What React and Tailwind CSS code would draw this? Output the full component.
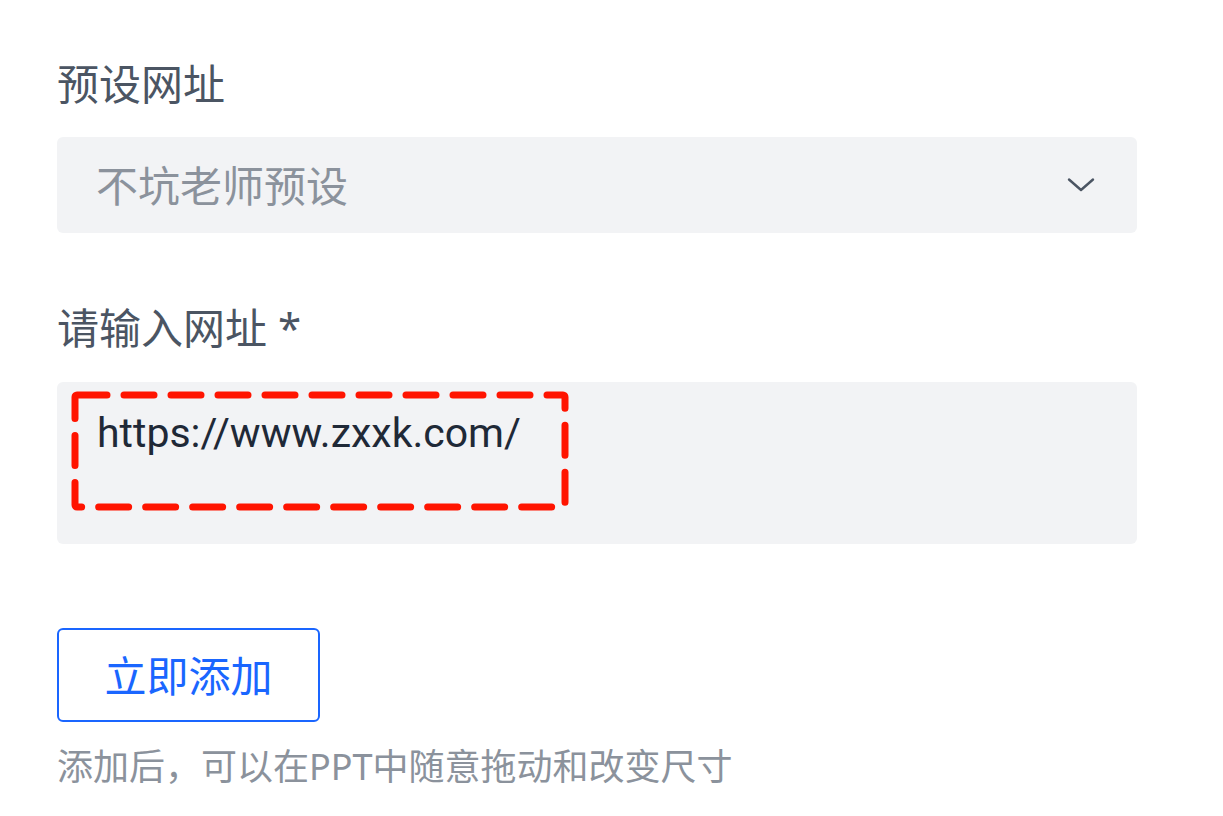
import React from 'react';

function Chevron() {
  return (
    <svg width="28" height="16" viewBox="0 0 28 16" fill="none" className="shrink-0">
      <path d="M2 2.5 L14 13 L26 2.5" stroke="#4b5563" strokeWidth="2.4" strokeLinecap="round" strokeLinejoin="round" />
    </svg>
  );
}

export default function App() {
  return (
    <div
      className="min-h-[816px] w-[1223px] bg-white pl-[57px] pt-[52px]"
      style={{ fontFamily: '"Noto Sans", "Noto Sans CJK SC", sans-serif' }}
    >
      <div className="w-[1080px]">
        <label className="block text-[42px] leading-[63px] text-[#4b5563]">预设网址</label>

        <div className="mt-[22px] flex h-[96px] items-center justify-between rounded-[6px] bg-[#f2f3f5] pl-[39px] pr-[42px]">
          <span className="text-[42px] leading-[63px] text-[#8b929c]">不坑老师预设</span>
          <Chevron />
        </div>

        <label className="mt-[63px] block text-[42px] leading-[63px] text-[#4b5563]">
          请输入网址 <span>*</span>
        </label>

        <div className="relative mt-[23px] h-[162px] rounded-[6px] bg-[#f2f3f5] pl-[40px] pt-[20px]">
          <span className="font-['Roboto'] text-[41px] leading-[63px] text-[#1f2937]">https://www.zxxk.com/</span>
          <svg className="absolute left-[14px] top-[9px]" width="500" height="122" viewBox="0 0 500 122" fill="none">
            <rect x="4" y="4" width="490" height="112" rx="2" stroke="#ff1400" strokeWidth="7" strokeDasharray="30 17" strokeLinecap="round" />
          </svg>
        </div>

        <button className="mt-[84px] flex h-[94px] w-[263px] items-center justify-center rounded-[6px] border-2 border-[#1a66ff] bg-white text-[42px] text-[#1a66ff]">
          立即添加
        </button>

        <p className="mt-[18px] text-[36px] leading-[54px] text-[#8b929c]">添加后，可以在PPT中随意拖动和改变尺寸</p>
      </div>
    </div>
  );
}
